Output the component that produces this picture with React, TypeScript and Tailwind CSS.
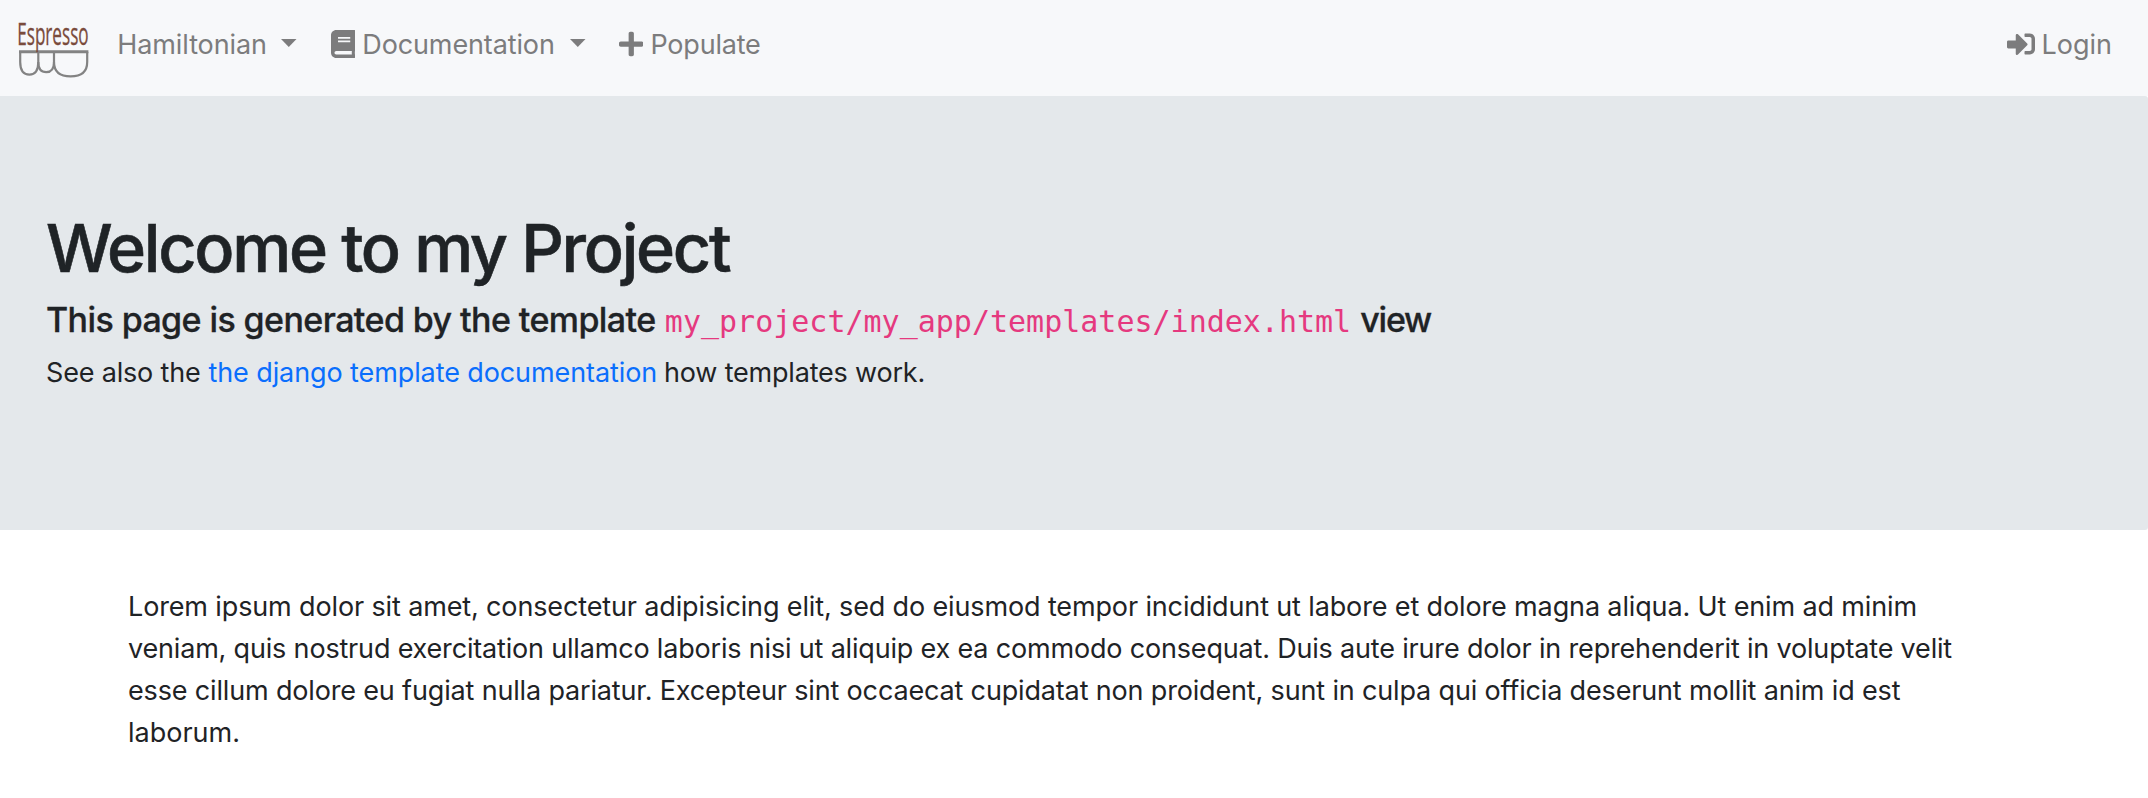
import type { ReactNode } from "react";
import { FaBook, FaPlus, FaSignInAlt } from "react-icons/fa";

function Logo() {
  return (
    <svg className="mt-[14px] h-[68px] w-[78px] shrink-0 overflow-visible" viewBox="14 14 78 68" fill="none">
      <g stroke="#838383" strokeWidth="2.2">
        <path d="M19 51.8H88.4" strokeWidth="3" />
        <path d="M20.2 52V62C20.2 71 24 74.6 29.4 74.6S38.3 71 38.3 62V52" />
        <path d="M38.3 62C38.3 69 41 72.2 46.2 72.2S54 69 54 62V52" />
        <path d="M54 62C54 71.5 60 76.4 70.6 76.4S87.2 71.5 87.2 62V52" />
      </g>
      <text
        transform="translate(17.2 44.5) scale(0.562 1)"
        className="font-['Open_Sans','Noto_Sans',sans-serif] text-[30.5px]"
        fill="#7a4b3c"
        stroke="#7a4b3c"
        strokeWidth="0.25"
        vectorEffect="non-scaling-stroke"
      >
        Espresso
      </text>
    </svg>
  );
}

function Caret() {
  return (
    <svg className="mt-[39px] h-2 w-[15.5px] shrink-0" viewBox="0 0 15.5 8" fill="currentColor">
      <path d="M0 0H15.5L7.75 8Z" />
    </svg>
  );
}

function NavText({ className, children }: { className: string; children: ReactNode }) {
  return <span className={`mt-[24px] shrink-0 whitespace-nowrap ${className}`}>{children}</span>;
}

function Navbar() {
  return (
    <nav className="flex h-24 items-start bg-[#f7f8fa] pr-[36px] pl-[14px] text-[#7c7c7d]">
      <a href="#home">
        <Logo />
      </a>
      <a href="#hamiltonian" className="ml-[25.3px] flex w-[179.7px] items-start">
        <NavText className="w-[164.2px] tracking-[-0.1px]">Hamiltonian</NavText>
        <Caret />
      </a>
      <a href="#docs" className="ml-[34px] flex w-[254.7px] items-start">
        <FaBook className="mt-[29.5px] h-7 w-[24.5px] shrink-0" />
        <NavText className="ml-[6.8px] w-[207.9px] tracking-[-0.12px]">Documentation</NavText>
        <Caret />
      </a>
      <a href="#populate" className="ml-[33.3px] flex items-start">
        <FaPlus className="mt-[29.5px] h-7 w-[24.5px] shrink-0" />
        <NavText className="ml-[7px] tracking-[-0.2px]">Populate</NavText>
      </a>
      <a href="#login" className="ml-auto flex items-start">
        <FaSignInAlt className="mt-[29.5px] size-7 shrink-0" />
        <NavText className="ml-[6px]">Login</NavText>
      </a>
    </nav>
  );
}

function Jumbotron() {
  return (
    <header className="h-[434px] rounded-r-[3px] bg-[#e4e8eb] pt-[110px] pl-[46px] whitespace-nowrap">
      <h1 className="text-[66.5px] leading-[84px] font-medium tracking-[-2.3px] [-webkit-text-stroke:0.6px_#1f2326]">
        Welcome to my Project
      </h1>
      <h3 className="mt-[9px] flex h-[42px] items-baseline text-[34px] leading-[42px] font-medium tracking-[-0.59px]">
        <span className="[-webkit-text-stroke:0.3px_#1f2326]">This page is generated by the template</span>
        <code className="ml-[9.3px] font-['DejaVu_Sans_Mono',monospace] text-[30px] leading-none font-normal tracking-normal text-[#e5397f]">
          my_project/my_app/templates/index.html
        </code>
        <span className="ml-[9px] tracking-[-1.2px] [-webkit-text-stroke:0.3px_#1f2326]">view</span>
      </h3>
      <p className="mt-[11px] flex">
        <span className="tracking-[-0.18px]">See also the</span>
        <a href="#templates" className="ml-[8px] tracking-[-0.1px] text-[#0a6efd]">
          the django template documentation
        </a>
        <span className="ml-[7px] tracking-[-0.2px]">how templates work.</span>
      </p>
    </header>
  );
}

export default function App() {
  return (
    <div className="h-[798px] overflow-hidden bg-white font-['Inter','Liberation_Sans',sans-serif] text-[27px] leading-[42px] text-[#1f2326]">
      <Navbar />
      <Jumbotron />
      <main className="px-32 pt-[56px] whitespace-nowrap">
        <p>
          <span className="block tracking-[-0.136px]">
            Lorem ipsum dolor sit amet, consectetur adipisicing elit, sed do eiusmod tempor incididunt ut labore et
            dolore magna aliqua. Ut enim ad minim
          </span>
          <span className="block tracking-[-0.18px]">
            veniam, quis nostrud exercitation ullamco laboris nisi ut aliquip ex ea commodo consequat. Duis aute irure
            dolor in reprehenderit in voluptate velit
          </span>
          <span className="block tracking-[-0.16px]">
            esse cillum dolore eu fugiat nulla pariatur. Excepteur sint occaecat cupidatat non proident, sunt in culpa
            qui officia deserunt mollit anim id est
          </span>
          <span className="block">laborum.</span>
        </p>
      </main>
    </div>
  );
}
